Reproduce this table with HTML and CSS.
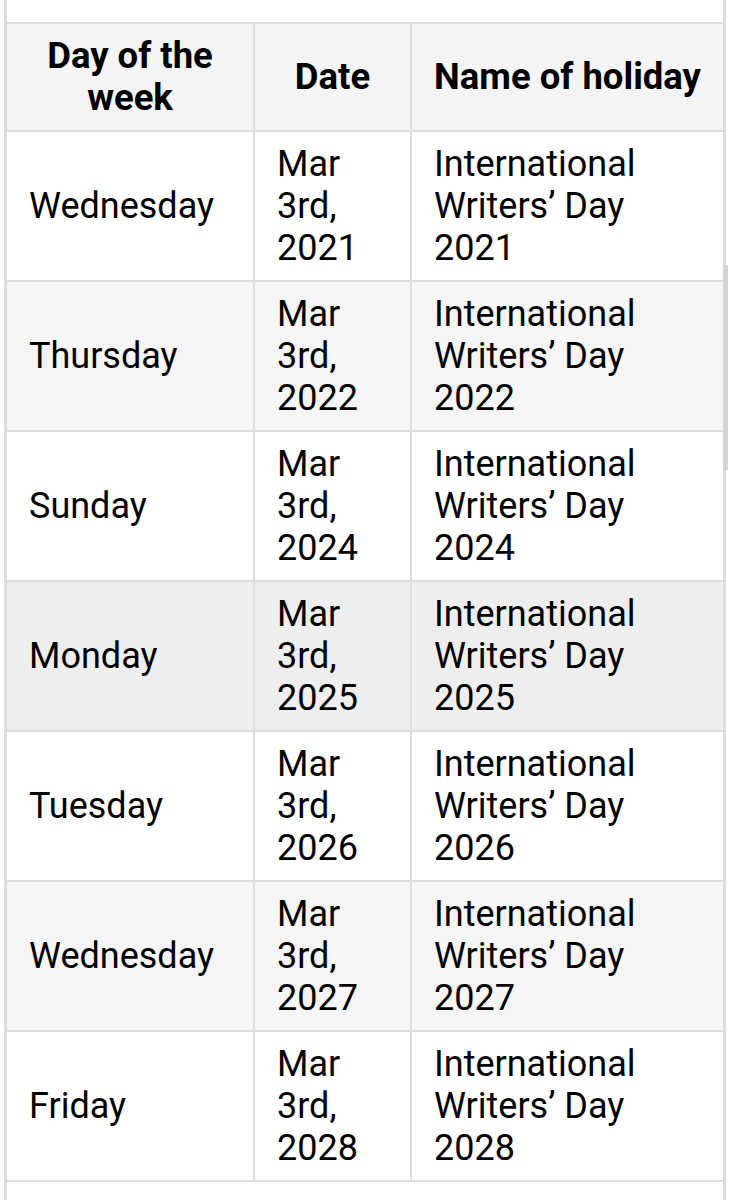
FILE: index.html
```html
<!DOCTYPE html>
<html>
<head>
<meta charset="utf-8">
<link rel="stylesheet" href="styles.css">
</head>
<body>
<div class="wrap">
  <table class="holidays">
    <colgroup>
      <col class="c1"><col class="c2"><col class="c3">
    </colgroup>
    <thead>
      <tr><th>Day of the week</th><th>Date</th><th>Name of holiday</th></tr>
    </thead>
    <tbody>
      <tr><td>Wednesday</td><td>Mar 3rd, 2021</td><td>International Writers’ Day 2021</td></tr>
      <tr class="alt"><td>Thursday</td><td>Mar 3rd, 2022</td><td>International Writers’ Day 2022</td></tr>
      <tr><td>Sunday</td><td>Mar 3rd, 2024</td><td>International Writers’ Day 2024</td></tr>
      <tr class="hover"><td>Monday</td><td>Mar 3rd, 2025</td><td>International Writers’ Day 2025</td></tr>
      <tr><td>Tuesday</td><td>Mar 3rd, 2026</td><td>International Writers’ Day 2026</td></tr>
      <tr class="alt"><td>Wednesday</td><td>Mar 3rd, 2027</td><td>International Writers’ Day 2027</td></tr>
      <tr><td>Friday</td><td>Mar 3rd, 2028</td><td>International Writers’ Day 2028</td></tr>
    </tbody>
  </table>
  <div class="scrollbar"></div>
</div>
</body>
</html>
```

FILE: styles.css
```css
html, body {
  margin: 0;
  padding: 0;
  background: #fff;
}
body {
  font-family: Roboto, "Liberation Sans", sans-serif;
  color: #000;
  height: 1200px;
  overflow: hidden;
}
.wrap {
  position: relative;
  margin-left: 4px;
  width: 722px;
  height: 1200px;
  box-sizing: border-box;
  border-left: 3px solid #dcdcdc;
  border-right: 3px solid #dcdcdc;
  padding-top: 22px;
}
.holidays {
  width: 100%;
  border-collapse: collapse;
  table-layout: fixed;
}
.c1 { width: 247px; }
.c2 { width: 157px; }
.holidays th,
.holidays td {
  border: 2px solid #dddddd;
  padding: 11px 22px;
  font-size: 36px;
  line-height: 42px;
  vertical-align: middle;
  text-align: left;
}
.holidays th {
  background: #f4f4f4;
  font-weight: 700;
  font-size: 36.5px;
  text-align: center;
  padding: 11px 6px;
}
.holidays th:first-child,
.holidays td:first-child {
  border-left: none;
}
.holidays th:last-child,
.holidays td:last-child {
  border-right: none;
}
.holidays tr.alt td {
  background: #f5f5f5;
}
.holidays tr.hover td {
  background: #eeeeee;
}
.scrollbar {
  position: absolute;
  right: -5px;
  top: 265px;
  width: 5px;
  height: 205px;
  background: #d4d4d4;
}
```
